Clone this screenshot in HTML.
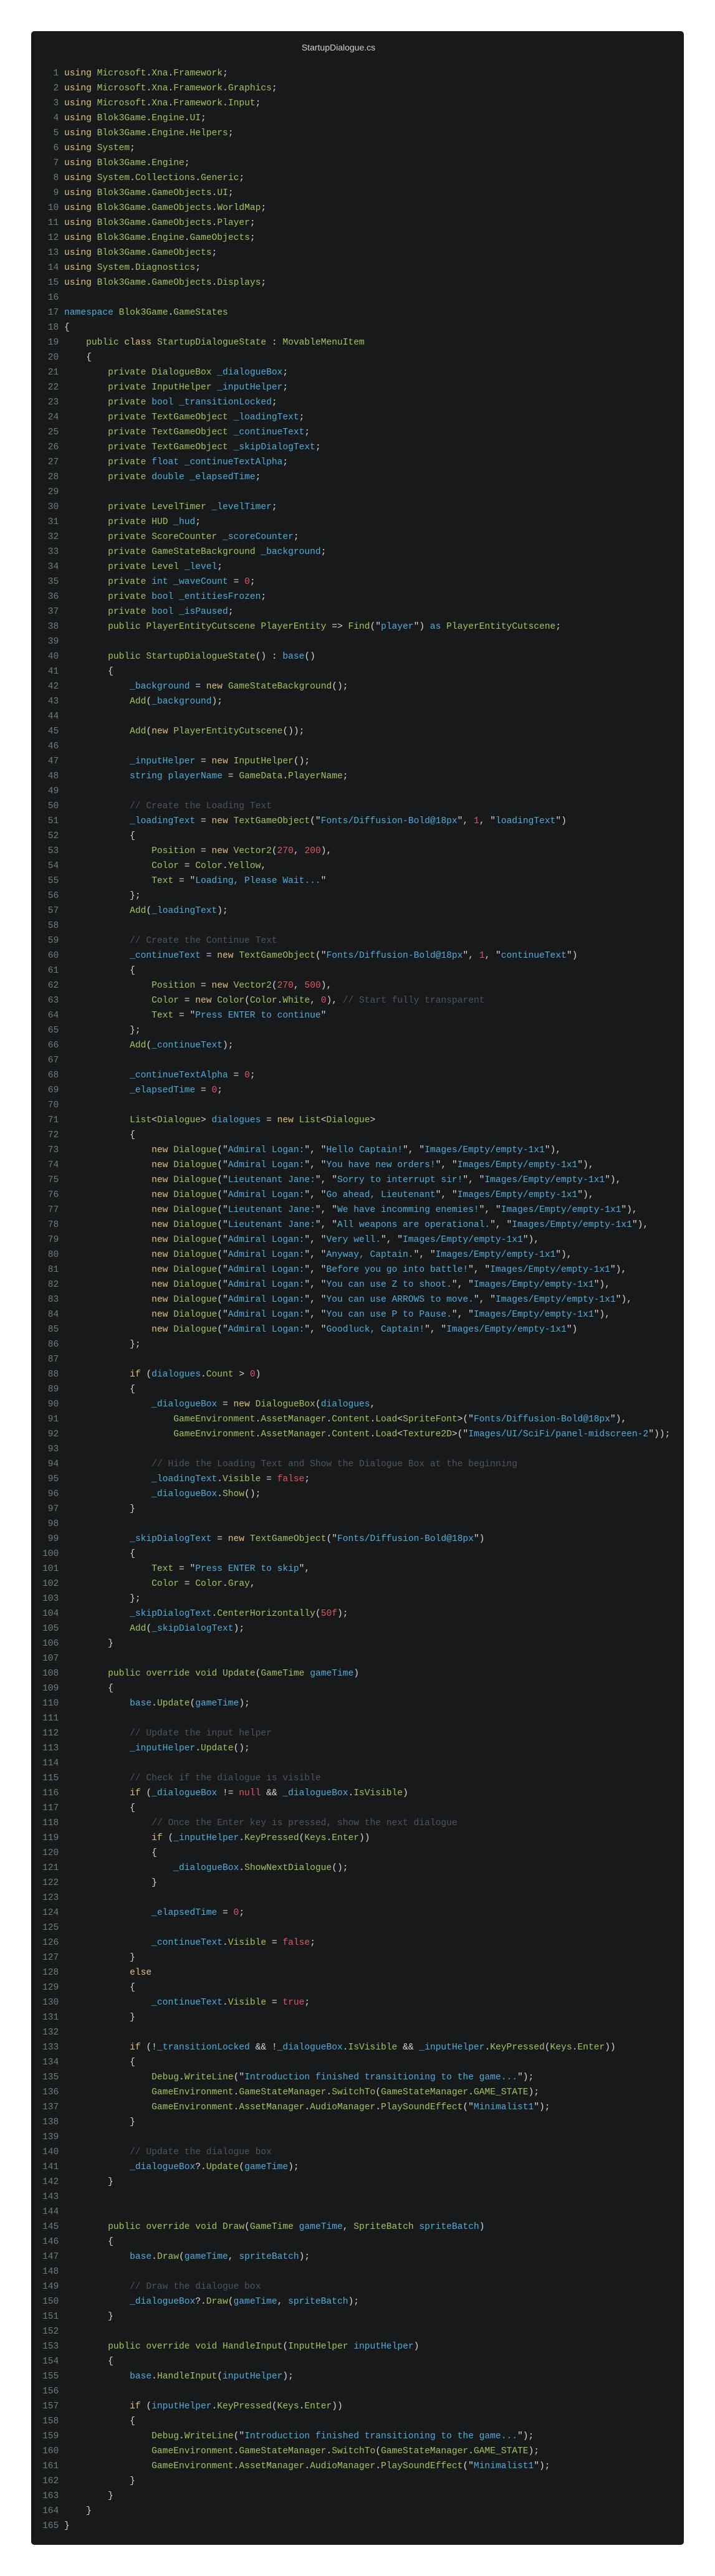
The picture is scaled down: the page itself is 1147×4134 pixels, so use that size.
<!DOCTYPE html>
<html><head><meta charset="utf-8">
<style>
html,body{margin:0;padding:0;background:#fff;}
body{width:1147px;height:4134px;position:relative;overflow:hidden;}
.box{position:absolute;left:50px;top:50px;width:1047px;height:4034px;background:#18191b;border-radius:5px;}
.title{position:absolute;left:0;width:986px;top:18px;text-align:center;font:14px "Liberation Sans",sans-serif;color:#d0d0d0;}
pre{position:absolute;left:18px;top:56px;margin:0;font-family:"Liberation Mono",monospace;font-size:14.6px;line-height:24px;color:#d4d4d4;white-space:pre;}
.n{color:#6c7f80}.k{color:#e5c07b}.g{color:#a5c25c}.b{color:#4eaedb}.r{color:#e05561}.c{color:#4d5560}
</style></head><body>
<div class="box"><div class="title">StartupDialogue.cs</div>
<pre><span class="n">  1</span> <span class="k">using</span> <span class="g">Microsoft</span>.<span class="g">Xna</span>.<span class="g">Framework</span>;
<span class="n">  2</span> <span class="k">using</span> <span class="g">Microsoft</span>.<span class="g">Xna</span>.<span class="g">Framework</span>.<span class="g">Graphics</span>;
<span class="n">  3</span> <span class="k">using</span> <span class="g">Microsoft</span>.<span class="g">Xna</span>.<span class="g">Framework</span>.<span class="g">Input</span>;
<span class="n">  4</span> <span class="k">using</span> <span class="g">Blok3Game</span>.<span class="g">Engine</span>.<span class="g">UI</span>;
<span class="n">  5</span> <span class="k">using</span> <span class="g">Blok3Game</span>.<span class="g">Engine</span>.<span class="g">Helpers</span>;
<span class="n">  6</span> <span class="k">using</span> <span class="g">System</span>;
<span class="n">  7</span> <span class="k">using</span> <span class="g">Blok3Game</span>.<span class="g">Engine</span>;
<span class="n">  8</span> <span class="k">using</span> <span class="g">System</span>.<span class="g">Collections</span>.<span class="g">Generic</span>;
<span class="n">  9</span> <span class="k">using</span> <span class="g">Blok3Game</span>.<span class="g">GameObjects</span>.<span class="g">UI</span>;
<span class="n"> 10</span> <span class="k">using</span> <span class="g">Blok3Game</span>.<span class="g">GameObjects</span>.<span class="g">WorldMap</span>;
<span class="n"> 11</span> <span class="k">using</span> <span class="g">Blok3Game</span>.<span class="g">GameObjects</span>.<span class="g">Player</span>;
<span class="n"> 12</span> <span class="k">using</span> <span class="g">Blok3Game</span>.<span class="g">Engine</span>.<span class="g">GameObjects</span>;
<span class="n"> 13</span> <span class="k">using</span> <span class="g">Blok3Game</span>.<span class="g">GameObjects</span>;
<span class="n"> 14</span> <span class="k">using</span> <span class="g">System</span>.<span class="g">Diagnostics</span>;
<span class="n"> 15</span> <span class="k">using</span> <span class="g">Blok3Game</span>.<span class="g">GameObjects</span>.<span class="g">Displays</span>;
<span class="n"> 16</span>
<span class="n"> 17</span> <span class="b">namespace</span> <span class="g">Blok3Game</span>.<span class="g">GameStates</span>
<span class="n"> 18</span> {
<span class="n"> 19</span>     <span class="g">public</span> <span class="k">class</span> <span class="g">StartupDialogueState</span> : <span class="g">MovableMenuItem</span>
<span class="n"> 20</span>     {
<span class="n"> 21</span>         <span class="g">private</span> <span class="g">DialogueBox</span> <span class="b">_dialogueBox</span>;
<span class="n"> 22</span>         <span class="g">private</span> <span class="g">InputHelper</span> <span class="b">_inputHelper</span>;
<span class="n"> 23</span>         <span class="g">private</span> <span class="b">bool</span> <span class="b">_transitionLocked</span>;
<span class="n"> 24</span>         <span class="g">private</span> <span class="g">TextGameObject</span> <span class="b">_loadingText</span>;
<span class="n"> 25</span>         <span class="g">private</span> <span class="g">TextGameObject</span> <span class="b">_continueText</span>;
<span class="n"> 26</span>         <span class="g">private</span> <span class="g">TextGameObject</span> <span class="b">_skipDialogText</span>;
<span class="n"> 27</span>         <span class="g">private</span> <span class="b">float</span> <span class="b">_continueTextAlpha</span>;
<span class="n"> 28</span>         <span class="g">private</span> <span class="b">double</span> <span class="b">_elapsedTime</span>;
<span class="n"> 29</span>
<span class="n"> 30</span>         <span class="g">private</span> <span class="g">LevelTimer</span> <span class="b">_levelTimer</span>;
<span class="n"> 31</span>         <span class="g">private</span> <span class="g">HUD</span> <span class="b">_hud</span>;
<span class="n"> 32</span>         <span class="g">private</span> <span class="g">ScoreCounter</span> <span class="b">_scoreCounter</span>;
<span class="n"> 33</span>         <span class="g">private</span> <span class="g">GameStateBackground</span> <span class="b">_background</span>;
<span class="n"> 34</span>         <span class="g">private</span> <span class="g">Level</span> <span class="b">_level</span>;
<span class="n"> 35</span>         <span class="g">private</span> <span class="b">int</span> <span class="b">_waveCount</span> = <span class="r">0</span>;
<span class="n"> 36</span>         <span class="g">private</span> <span class="b">bool</span> <span class="b">_entitiesFrozen</span>;
<span class="n"> 37</span>         <span class="g">private</span> <span class="b">bool</span> <span class="b">_isPaused</span>;
<span class="n"> 38</span>         <span class="g">public</span> <span class="g">PlayerEntityCutscene</span> <span class="g">PlayerEntity</span> =&gt; <span class="g">Find</span>("<span class="b">player</span>") <span class="b">as</span> <span class="g">PlayerEntityCutscene</span>;
<span class="n"> 39</span>
<span class="n"> 40</span>         <span class="g">public</span> <span class="g">StartupDialogueState</span>() : <span class="b">base</span>()
<span class="n"> 41</span>         {
<span class="n"> 42</span>             <span class="b">_background</span> = <span class="k">new</span> <span class="g">GameStateBackground</span>();
<span class="n"> 43</span>             <span class="g">Add</span>(<span class="b">_background</span>);
<span class="n"> 44</span>
<span class="n"> 45</span>             <span class="g">Add</span>(<span class="k">new</span> <span class="g">PlayerEntityCutscene</span>());
<span class="n"> 46</span>
<span class="n"> 47</span>             <span class="b">_inputHelper</span> = <span class="k">new</span> <span class="g">InputHelper</span>();
<span class="n"> 48</span>             <span class="b">string</span> <span class="b">playerName</span> = <span class="g">GameData</span>.<span class="g">PlayerName</span>;
<span class="n"> 49</span>
<span class="n"> 50</span>             <span class="c">// Create the Loading Text</span>
<span class="n"> 51</span>             <span class="b">_loadingText</span> = <span class="k">new</span> <span class="g">TextGameObject</span>("<span class="b">Fonts/Diffusion-Bold@18px</span>", <span class="r">1</span>, "<span class="b">loadingText</span>")
<span class="n"> 52</span>             {
<span class="n"> 53</span>                 <span class="g">Position</span> = <span class="k">new</span> <span class="g">Vector2</span>(<span class="r">270</span>, <span class="r">200</span>),
<span class="n"> 54</span>                 <span class="g">Color</span> = <span class="g">Color</span>.<span class="g">Yellow</span>,
<span class="n"> 55</span>                 <span class="g">Text</span> = "<span class="b">Loading, Please Wait...</span>"
<span class="n"> 56</span>             };
<span class="n"> 57</span>             <span class="g">Add</span>(<span class="b">_loadingText</span>);
<span class="n"> 58</span>
<span class="n"> 59</span>             <span class="c">// Create the Continue Text</span>
<span class="n"> 60</span>             <span class="b">_continueText</span> = <span class="k">new</span> <span class="g">TextGameObject</span>("<span class="b">Fonts/Diffusion-Bold@18px</span>", <span class="r">1</span>, "<span class="b">continueText</span>")
<span class="n"> 61</span>             {
<span class="n"> 62</span>                 <span class="g">Position</span> = <span class="k">new</span> <span class="g">Vector2</span>(<span class="r">270</span>, <span class="r">500</span>),
<span class="n"> 63</span>                 <span class="g">Color</span> = <span class="k">new</span> <span class="g">Color</span>(<span class="g">Color</span>.<span class="g">White</span>, <span class="r">0</span>), <span class="c">// Start fully transparent</span>
<span class="n"> 64</span>                 <span class="g">Text</span> = "<span class="b">Press ENTER to continue</span>"
<span class="n"> 65</span>             };
<span class="n"> 66</span>             <span class="g">Add</span>(<span class="b">_continueText</span>);
<span class="n"> 67</span>
<span class="n"> 68</span>             <span class="b">_continueTextAlpha</span> = <span class="r">0</span>;
<span class="n"> 69</span>             <span class="b">_elapsedTime</span> = <span class="r">0</span>;
<span class="n"> 70</span>
<span class="n"> 71</span>             <span class="g">List</span>&lt;<span class="g">Dialogue</span>&gt; <span class="b">dialogues</span> = <span class="k">new</span> <span class="g">List</span>&lt;<span class="g">Dialogue</span>&gt;
<span class="n"> 72</span>             {
<span class="n"> 73</span>                 <span class="k">new</span> <span class="g">Dialogue</span>("<span class="b">Admiral Logan:</span>", "<span class="b">Hello Captain!</span>", "<span class="b">Images/Empty/empty-1x1</span>"),
<span class="n"> 74</span>                 <span class="k">new</span> <span class="g">Dialogue</span>("<span class="b">Admiral Logan:</span>", "<span class="b">You have new orders!</span>", "<span class="b">Images/Empty/empty-1x1</span>"),
<span class="n"> 75</span>                 <span class="k">new</span> <span class="g">Dialogue</span>("<span class="b">Lieutenant Jane:</span>", "<span class="b">Sorry to interrupt sir!</span>", "<span class="b">Images/Empty/empty-1x1</span>"),
<span class="n"> 76</span>                 <span class="k">new</span> <span class="g">Dialogue</span>("<span class="b">Admiral Logan:</span>", "<span class="b">Go ahead, Lieutenant</span>", "<span class="b">Images/Empty/empty-1x1</span>"),
<span class="n"> 77</span>                 <span class="k">new</span> <span class="g">Dialogue</span>("<span class="b">Lieutenant Jane:</span>", "<span class="b">We have incomming enemies!</span>", "<span class="b">Images/Empty/empty-1x1</span>"),
<span class="n"> 78</span>                 <span class="k">new</span> <span class="g">Dialogue</span>("<span class="b">Lieutenant Jane:</span>", "<span class="b">All weapons are operational.</span>", "<span class="b">Images/Empty/empty-1x1</span>"),
<span class="n"> 79</span>                 <span class="k">new</span> <span class="g">Dialogue</span>("<span class="b">Admiral Logan:</span>", "<span class="b">Very well.</span>", "<span class="b">Images/Empty/empty-1x1</span>"),
<span class="n"> 80</span>                 <span class="k">new</span> <span class="g">Dialogue</span>("<span class="b">Admiral Logan:</span>", "<span class="b">Anyway, Captain.</span>", "<span class="b">Images/Empty/empty-1x1</span>"),
<span class="n"> 81</span>                 <span class="k">new</span> <span class="g">Dialogue</span>("<span class="b">Admiral Logan:</span>", "<span class="b">Before you go into battle!</span>", "<span class="b">Images/Empty/empty-1x1</span>"),
<span class="n"> 82</span>                 <span class="k">new</span> <span class="g">Dialogue</span>("<span class="b">Admiral Logan:</span>", "<span class="b">You can use Z to shoot.</span>", "<span class="b">Images/Empty/empty-1x1</span>"),
<span class="n"> 83</span>                 <span class="k">new</span> <span class="g">Dialogue</span>("<span class="b">Admiral Logan:</span>", "<span class="b">You can use ARROWS to move.</span>", "<span class="b">Images/Empty/empty-1x1</span>"),
<span class="n"> 84</span>                 <span class="k">new</span> <span class="g">Dialogue</span>("<span class="b">Admiral Logan:</span>", "<span class="b">You can use P to Pause.</span>", "<span class="b">Images/Empty/empty-1x1</span>"),
<span class="n"> 85</span>                 <span class="k">new</span> <span class="g">Dialogue</span>("<span class="b">Admiral Logan:</span>", "<span class="b">Goodluck, Captain!</span>", "<span class="b">Images/Empty/empty-1x1</span>")
<span class="n"> 86</span>             };
<span class="n"> 87</span>
<span class="n"> 88</span>             <span class="k">if</span> (<span class="b">dialogues</span>.<span class="g">Count</span> &gt; <span class="r">0</span>)
<span class="n"> 89</span>             {
<span class="n"> 90</span>                 <span class="b">_dialogueBox</span> = <span class="k">new</span> <span class="g">DialogueBox</span>(<span class="b">dialogues</span>,
<span class="n"> 91</span>                     <span class="g">GameEnvironment</span>.<span class="g">AssetManager</span>.<span class="g">Content</span>.<span class="g">Load</span>&lt;<span class="g">SpriteFont</span>&gt;("<span class="b">Fonts/Diffusion-Bold@18px</span>"),
<span class="n"> 92</span>                     <span class="g">GameEnvironment</span>.<span class="g">AssetManager</span>.<span class="g">Content</span>.<span class="g">Load</span>&lt;<span class="g">Texture2D</span>&gt;("<span class="b">Images/UI/SciFi/panel-midscreen-2</span>"));
<span class="n"> 93</span>
<span class="n"> 94</span>                 <span class="c">// Hide the Loading Text and Show the Dialogue Box at the beginning</span>
<span class="n"> 95</span>                 <span class="b">_loadingText</span>.<span class="g">Visible</span> = <span class="r">false</span>;
<span class="n"> 96</span>                 <span class="b">_dialogueBox</span>.<span class="g">Show</span>();
<span class="n"> 97</span>             }
<span class="n"> 98</span>
<span class="n"> 99</span>             <span class="b">_skipDialogText</span> = <span class="k">new</span> <span class="g">TextGameObject</span>("<span class="b">Fonts/Diffusion-Bold@18px</span>")
<span class="n">100</span>             {
<span class="n">101</span>                 <span class="g">Text</span> = "<span class="b">Press ENTER to skip</span>",
<span class="n">102</span>                 <span class="g">Color</span> = <span class="g">Color</span>.<span class="g">Gray</span>,
<span class="n">103</span>             };
<span class="n">104</span>             <span class="b">_skipDialogText</span>.<span class="g">CenterHorizontally</span>(<span class="r">50f</span>);
<span class="n">105</span>             <span class="g">Add</span>(<span class="b">_skipDialogText</span>);
<span class="n">106</span>         }
<span class="n">107</span>
<span class="n">108</span>         <span class="g">public</span> <span class="g">override</span> <span class="g">void</span> <span class="g">Update</span>(<span class="g">GameTime</span> <span class="b">gameTime</span>)
<span class="n">109</span>         {
<span class="n">110</span>             <span class="b">base</span>.<span class="g">Update</span>(<span class="b">gameTime</span>);
<span class="n">111</span>
<span class="n">112</span>             <span class="c">// Update the input helper</span>
<span class="n">113</span>             <span class="b">_inputHelper</span>.<span class="g">Update</span>();
<span class="n">114</span>
<span class="n">115</span>             <span class="c">// Check if the dialogue is visible</span>
<span class="n">116</span>             <span class="k">if</span> (<span class="b">_dialogueBox</span> != <span class="r">null</span> &amp;&amp; <span class="b">_dialogueBox</span>.<span class="g">IsVisible</span>)
<span class="n">117</span>             {
<span class="n">118</span>                 <span class="c">// Once the Enter key is pressed, show the next dialogue</span>
<span class="n">119</span>                 <span class="k">if</span> (<span class="b">_inputHelper</span>.<span class="g">KeyPressed</span>(<span class="g">Keys</span>.<span class="g">Enter</span>))
<span class="n">120</span>                 {
<span class="n">121</span>                     <span class="b">_dialogueBox</span>.<span class="g">ShowNextDialogue</span>();
<span class="n">122</span>                 }
<span class="n">123</span>
<span class="n">124</span>                 <span class="b">_elapsedTime</span> = <span class="r">0</span>;
<span class="n">125</span>
<span class="n">126</span>                 <span class="b">_continueText</span>.<span class="g">Visible</span> = <span class="r">false</span>;
<span class="n">127</span>             }
<span class="n">128</span>             <span class="k">else</span>
<span class="n">129</span>             {
<span class="n">130</span>                 <span class="b">_continueText</span>.<span class="g">Visible</span> = <span class="r">true</span>;
<span class="n">131</span>             }
<span class="n">132</span>
<span class="n">133</span>             <span class="k">if</span> (!<span class="b">_transitionLocked</span> &amp;&amp; !<span class="b">_dialogueBox</span>.<span class="g">IsVisible</span> &amp;&amp; <span class="b">_inputHelper</span>.<span class="g">KeyPressed</span>(<span class="g">Keys</span>.<span class="g">Enter</span>))
<span class="n">134</span>             {
<span class="n">135</span>                 <span class="g">Debug</span>.<span class="g">WriteLine</span>("<span class="b">Introduction finished transitioning to the game...</span>");
<span class="n">136</span>                 <span class="g">GameEnvironment</span>.<span class="g">GameStateManager</span>.<span class="g">SwitchTo</span>(<span class="g">GameStateManager</span>.<span class="g">GAME_STATE</span>);
<span class="n">137</span>                 <span class="g">GameEnvironment</span>.<span class="g">AssetManager</span>.<span class="g">AudioManager</span>.<span class="g">PlaySoundEffect</span>("<span class="b">Minimalist1</span>");
<span class="n">138</span>             }
<span class="n">139</span>
<span class="n">140</span>             <span class="c">// Update the dialogue box</span>
<span class="n">141</span>             <span class="b">_dialogueBox</span>?.<span class="g">Update</span>(<span class="b">gameTime</span>);
<span class="n">142</span>         }
<span class="n">143</span>
<span class="n">144</span>
<span class="n">145</span>         <span class="g">public</span> <span class="g">override</span> <span class="g">void</span> <span class="g">Draw</span>(<span class="g">GameTime</span> <span class="b">gameTime</span>, <span class="g">SpriteBatch</span> <span class="b">spriteBatch</span>)
<span class="n">146</span>         {
<span class="n">147</span>             <span class="b">base</span>.<span class="g">Draw</span>(<span class="b">gameTime</span>, <span class="b">spriteBatch</span>);
<span class="n">148</span>
<span class="n">149</span>             <span class="c">// Draw the dialogue box</span>
<span class="n">150</span>             <span class="b">_dialogueBox</span>?.<span class="g">Draw</span>(<span class="b">gameTime</span>, <span class="b">spriteBatch</span>);
<span class="n">151</span>         }
<span class="n">152</span>
<span class="n">153</span>         <span class="g">public</span> <span class="g">override</span> <span class="g">void</span> <span class="g">HandleInput</span>(<span class="g">InputHelper</span> <span class="b">inputHelper</span>)
<span class="n">154</span>         {
<span class="n">155</span>             <span class="b">base</span>.<span class="g">HandleInput</span>(<span class="b">inputHelper</span>);
<span class="n">156</span>
<span class="n">157</span>             <span class="k">if</span> (<span class="b">inputHelper</span>.<span class="g">KeyPressed</span>(<span class="g">Keys</span>.<span class="g">Enter</span>))
<span class="n">158</span>             {
<span class="n">159</span>                 <span class="g">Debug</span>.<span class="g">WriteLine</span>("<span class="b">Introduction finished transitioning to the game...</span>");
<span class="n">160</span>                 <span class="g">GameEnvironment</span>.<span class="g">GameStateManager</span>.<span class="g">SwitchTo</span>(<span class="g">GameStateManager</span>.<span class="g">GAME_STATE</span>);
<span class="n">161</span>                 <span class="g">GameEnvironment</span>.<span class="g">AssetManager</span>.<span class="g">AudioManager</span>.<span class="g">PlaySoundEffect</span>("<span class="b">Minimalist1</span>");
<span class="n">162</span>             }
<span class="n">163</span>         }
<span class="n">164</span>     }
<span class="n">165</span> }</pre>
</div>
</body></html>
